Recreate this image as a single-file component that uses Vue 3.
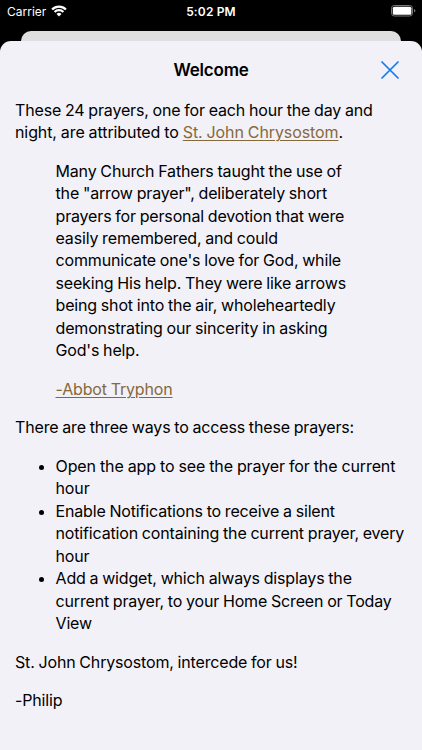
<script setup>
const quote = [
  'Many Church Fathers taught the use of',
  'the "arrow prayer", deliberately short',
  'prayers for personal devotion that were',
  'easily remembered, and could',
  "communicate one's love for God, while",
  'seeking His help. They were like arrows',
  'being shot into the air, wholeheartedly',
  'demonstrating our sincerity in asking',
  "God's help.",
];

const ways = [
  ['Open the app to see the prayer for the current', 'hour'],
  ['Enable Notifications to receive a silent', 'notification containing the current prayer, every', 'hour'],
  ['Add a widget, which always displays the', 'current prayer, to your Home Screen or Today', 'View'],
];
</script>

<template>
  <div class="screen">

    <!-- STATUS BAR -->
    <header class="status-bar">
      <div class="carrier">
        <span>Carrier</span>
        <svg class="wifi" viewBox="0 0 16 12">
          <path d="M1.1 4.5a9.8 9.8 0 0 1 13.8 0" />
          <path d="M3.6 7a6.2 6.2 0 0 1 8.8 0" />
          <path class="dot" d="M8 11.6 5.5 9.1a3.5 3.5 0 0 1 5 0z" />
        </svg>
      </div>
      <div class="clock">5:02 PM</div>
      <div class="power">
        <svg class="battery" viewBox="0 0 25 12">
          <rect class="shell" x="0.5" y="0.5" width="21" height="10.5" rx="2.8" />
          <rect class="charge" x="1.8" y="1.8" width="18.6" height="8" rx="1.5" />
          <path class="cap" d="M23 4v3.6q1.4-.5 1.4-1.8T23 4z" />
        </svg>
      </div>
    </header>

    <div class="back-sheet"></div>

    <!-- WELCOME SHEET -->
    <main class="sheet">
      <div class="title-bar">
        <h1>Welcome</h1>
        <button class="close-btn" aria-label="Close">
          <svg viewBox="0 0 18 18">
            <path d="M1 1 17 17M17 1 1 17" />
          </svg>
        </button>
      </div>

      <div class="content">
        <p>
          <span class="line">These 24 prayers, one for each hour the day and</span>
          <span class="line loose">night, are attributed to <a href="#">St. John Chrysostom</a>.</span>
        </p>

        <blockquote>
          <p>
            <span v-for="line in quote" :key="line" class="line">{{ line }}</span>
          </p>
          <p><a href="#">-Abbot Tryphon</a></p>
        </blockquote>

        <p>There are three ways to access these prayers:</p>

        <ul>
          <li v-for="(way, i) in ways" :key="i">
            <span v-for="line in way" :key="line" class="line" :class="{ loose: i === 0 }">{{ line }}</span>
          </li>
        </ul>

        <p>St. John Chrysostom, intercede for us!</p>
        <p>-Philip</p>
      </div>
    </main>

  </div>
</template>

<style>
body{
  background: #000;
}
</style>

<style scoped>

.screen{
  height: 750px;
  display: flex;
  flex-direction: column;
  overflow: hidden;
  background: #000;
  font-family: Inter, "Liberation Sans", sans-serif;
}

/* STATUS BAR */

.status-bar{
  height: 31px;
  padding: 0 6px 9px 7px;
  box-sizing: border-box;
  display: grid;
  grid-template-columns: 1fr auto 1fr;
  align-items: center;
  color: #fff;
  font-size: 12px;
}

.carrier{
  display: flex;
  align-items: center;
  gap: 4.5px;
}

.wifi{
  width: 16px;
  height: 12px;
  fill: none;
  stroke: #fff;
  stroke-width: 2.3;
}

.wifi .dot{
  fill: #fff;
  stroke: none;
}

.clock{
  padding-right: 1px;
  font-weight: 600;
  letter-spacing: 0.15px;
}

.power{
  display: flex;
  justify-content: flex-end;
}

.battery{
  width: 25px;
  height: 12px;
}

.shell{
  fill: none;
  stroke: #777;
}

.charge{
  fill: #fff;
}

.cap{
  fill: #777;
}

/* SHEETS */

.back-sheet{
  height: 10px;
  margin: 0 21px;
  background: #dfdfdf;
  border-radius: 10px 10px 0 0;
}

.sheet{
  flex: 1;
  background: #f2f1f8;
  border-radius: 11px 11px 0 0;
}

.title-bar{
  height: 57.6px;
  padding: 0 23.5px;
  display: grid;
  grid-template-columns: 1fr auto 1fr;
  align-items: center;
}

.title-bar h1{
  grid-column: 2;
  margin: 0;
  font-size: 17px;
  font-weight: 600;
  line-height: 22px;
  letter-spacing: -0.2px;
}

.close-btn{
  justify-self: end;
  display: flex;
  padding: 0;
  border: none;
  background: none;
  cursor: pointer;
}

.close-btn svg{
  width: 18px;
  height: 18px;
  fill: none;
  stroke: #1478f0;
  stroke-width: 1.7;
  stroke-linecap: round;
}

/* CONTENT */

.content{
  padding: 0 15px;
  color: #000;
  font-size: 16px;
  line-height: 22.4px;
  letter-spacing: -0.16px;
  word-spacing: -0.5px;
}

.content p{
  margin: 0 0 16.3px;
}

.line{
  display: block;
  white-space: nowrap;
}

.loose{
  letter-spacing: -0.1px;
  word-spacing: -0.4px;
}

.content a{
  color: #86693b;
  text-decoration: underline;
  text-decoration-thickness: 1px;
  text-underline-offset: 2px;
}

blockquote{
  margin: 0 40.5px;
}

ul{
  margin: 0 0 16.3px;
  padding-left: 40.5px;
}

</style>
